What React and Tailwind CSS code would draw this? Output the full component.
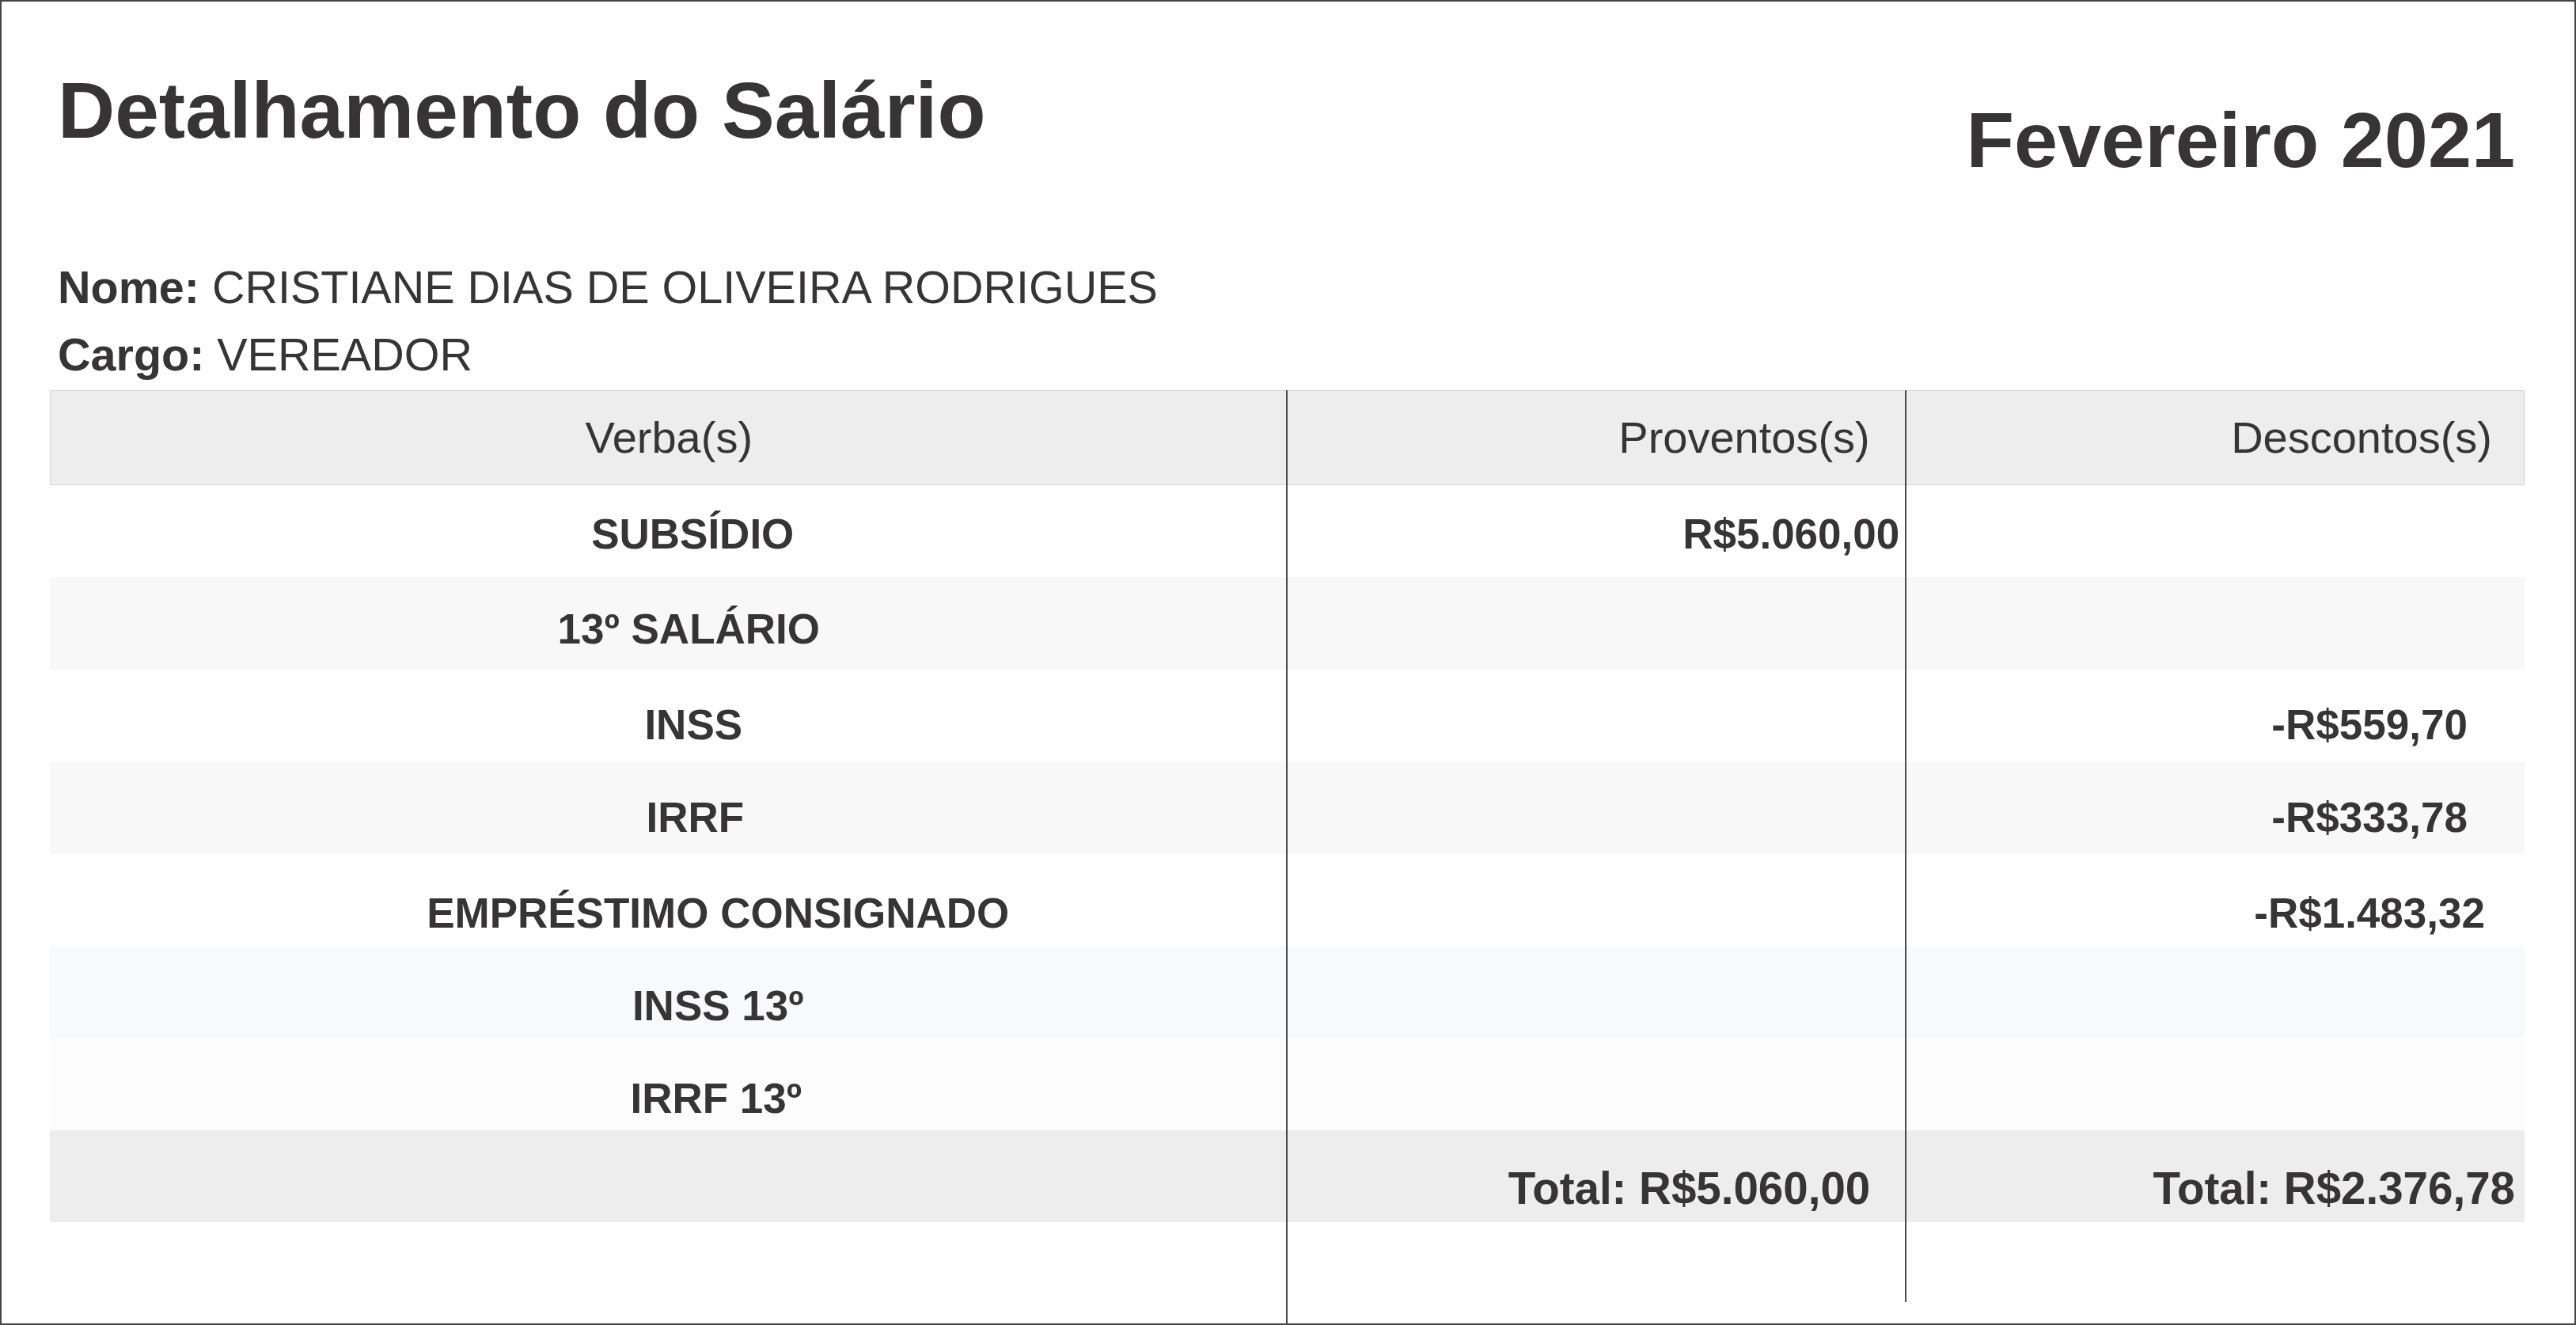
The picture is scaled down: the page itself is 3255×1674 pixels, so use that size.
import React from 'react';

const rows = [
  { verba: 'SUBSÍDIO', proventos: 'R$5.060,00', descontos: '', bg: 'bg-white', pt: 'pt-[35px]', pl: 'pl-[61px]' },
  { verba: '13º SALÁRIO', proventos: '', descontos: '', bg: 'bg-[#f8f8f8]', pt: 'pt-[39px]', pl: 'pl-[51px]' },
  { verba: 'INSS', proventos: '', descontos: '-R$559,70', bg: 'bg-white', pt: 'pt-[43px]', pl: 'pl-[63px]' },
  { verba: 'IRRF', proventos: '', descontos: '-R$333,78', bg: 'bg-[#f8f8f8]', pt: 'pt-[44px]', pl: 'pl-[67px]' },
  { verba: 'EMPRÉSTIMO CONSIGNADO', proventos: '', descontos: '-R$1.483,32', bg: 'bg-white', pt: 'pt-[48px]', pl: 'pl-[125px]' },
  { verba: 'INSS 13º', proventos: '', descontos: '', bg: 'bg-[#f8f9fa]', pt: 'pt-[49px]', pl: 'pl-[125px]' },
  { verba: 'IRRF 13º', proventos: '', descontos: '', bg: 'bg-[#fcfcfc]', pt: 'pt-[50px]', pl: 'pl-[120px]' },
];

const App = () => {
  return (
    <div className="w-[3255px] h-[1674px] border-2 border-[#444444] bg-white text-[#363435] font-['Liberation_Sans',Arial,sans-serif] overflow-hidden">

      {/* Title row */}
      <div className="flex justify-between items-start pl-[71px] pr-[75px] pt-[87px]">
        <h1 className="text-[100px] font-bold leading-none">Detalhamento do Salário</h1>
        <h2 className="text-[99px] font-bold leading-none mt-[38px]">Fevereiro 2021</h2>
      </div>

      {/* Employee info */}
      <div className="pl-[71px] mt-[95px] text-[57.5px] leading-[85px]">
        <p><span className="font-bold">Nome:</span> CRISTIANE DIAS DE OLIVEIRA RODRIGUES</p>
        <p><span className="font-bold">Cargo:</span> VEREADOR</p>
      </div>

      {/* Salary table */}
      <div className="relative ml-[61px] mt-[2px] w-[3127px]">
        <div className="flex items-center h-[120px] bg-[#ededed] border border-[#d6d6d6] text-[56px] leading-none">
          <div className="w-1/2 text-center">Verba(s)</div>
          <div className="w-1/4 text-right pr-[45px]">Proventos(s)</div>
          <div className="w-1/4 text-right pr-[40px]">Descontos(s)</div>
        </div>

        {rows.map((row) => (
          <div key={row.verba} className={`flex items-start h-[116.4px] text-[53px] font-bold leading-none ${row.bg} ${row.pt}`}>
            <div className={`w-1/2 text-center whitespace-nowrap ${row.pl}`}>{row.verba}</div>
            <div className="w-1/4 text-right pr-[8px]">{row.proventos}</div>
            <div className="w-1/4 text-center pl-[390px] whitespace-nowrap">{row.descontos}</div>
          </div>
        ))}

        <div className="flex items-start h-[116.4px] pt-[46px] bg-[#ededed] text-[56.5px] font-bold leading-none">
          <div className="w-1/2" />
          <div className="w-1/4 text-right pr-[45px]">Total: R$5.060,00</div>
          <div className="w-1/4 text-right pr-[12px]">Total: R$2.376,78</div>
        </div>

        {/* column rules */}
        <div className="absolute top-0 left-[1562px] w-[2px] h-[1179px] bg-[#4a4a4a]" />
        <div className="absolute top-0 left-[2344px] w-[2px] h-[1152px] bg-[#4a4a4a]" />
      </div>
    </div>
  );
};

export default App;
